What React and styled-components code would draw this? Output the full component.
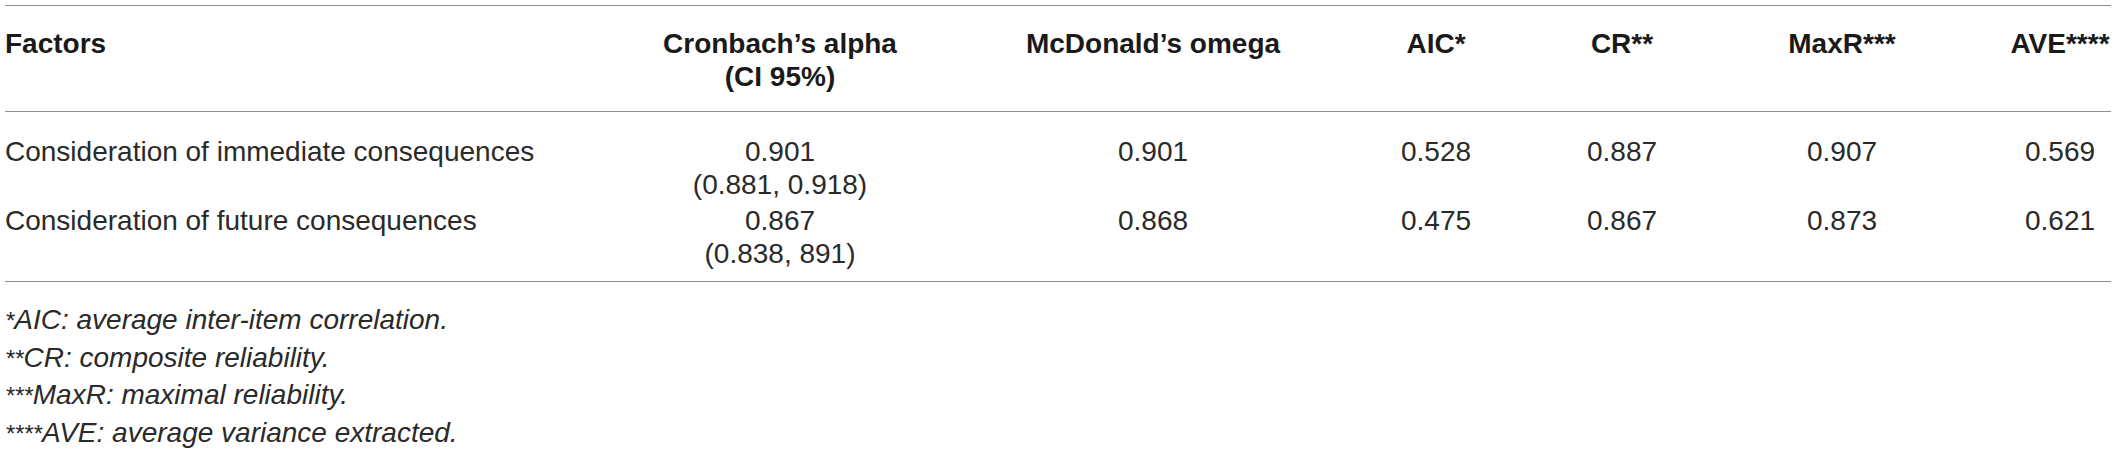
import React from "react";
import styled, { createGlobalStyle } from "styled-components";

const Global = createGlobalStyle`
  html, body { margin: 0; padding: 0; background: #fff; }
  body { font-family: "Liberation Sans", Arial, Helvetica, sans-serif; color: #222; }
`;

const Wrap = styled.div`
  padding: 5px 6px 0 5px;
`;

const COLS = "552px 446px 300px 266px 106px 334px 102px";

const Section = styled.div`
  display: grid;
  grid-template-columns: ${COLS};
  row-gap: 3px;
  padding: ${(p) => (p.$last ? "23px 0 11px" : "21px 0 18px")};
  border-top: 1px solid #8e8e8e;
  ${(p) => (p.$last ? "border-bottom: 1px solid #8e8e8e;" : "")}
`;

const Cell = styled.div`
  font-size: 28px;
  line-height: 33px;
  font-weight: ${(p) => (p.$head ? 700 : 400)};
  text-align: ${(p) => (p.$left ? "left" : "center")};
  white-space: nowrap;
  color: ${(p) => (p.$head ? "#1a1a1a" : "#2a2a2a")};
`;

const Notes = styled.div`
  padding-top: 20px;
  display: flex;
  flex-direction: column;
`;

const Note = styled.div`
  font-size: 28px;
  line-height: 36.5px;
  font-style: italic;
  color: #2a2a2a;
`;

const Star = styled.span`
  font-size: 0.85em;
`;

const headers = [
  ["Factors"],
  ["Cronbach’s alpha", "(CI 95%)"],
  ["McDonald’s omega"],
  ["AIC*"],
  ["CR**"],
  ["MaxR***"],
  ["AVE****"],
];

const rows = [
  [
    ["Consideration of immediate consequences"],
    ["0.901", "(0.881, 0.918)"],
    ["0.901"],
    ["0.528"],
    ["0.887"],
    ["0.907"],
    ["0.569"],
  ],
  [
    ["Consideration of future consequences"],
    ["0.867", "(0.838, 891)"],
    ["0.868"],
    ["0.475"],
    ["0.867"],
    ["0.873"],
    ["0.621"],
  ],
];

const notes = [
  ["*", "AIC: average inter-item correlation."],
  ["**", "CR: composite reliability."],
  ["***", "MaxR: maximal reliability."],
  ["****", "AVE: average variance extracted."],
];

const Lines = ({ lines }) =>
  lines.map((l, i) => (
    <React.Fragment key={i}>
      {i > 0 && <br />}
      {l}
    </React.Fragment>
  ));

export default function App() {
  return (
    <Wrap>
      <Global />
      <Section>
        {headers.map((h, i) => (
          <Cell key={i} $head $left={i === 0}>
            <Lines lines={h} />
          </Cell>
        ))}
      </Section>
      <Section $last>
        {rows.map((r, ri) =>
          r.map((c, ci) => (
            <Cell key={`${ri}-${ci}`} $left={ci === 0}>
              <Lines lines={c} />
            </Cell>
          ))
        )}
      </Section>
      <Notes>
        {notes.map(([s, t], i) => (
          <Note key={i}>
            <Star>{s}</Star>
            {t}
          </Note>
        ))}
      </Notes>
    </Wrap>
  );
}
